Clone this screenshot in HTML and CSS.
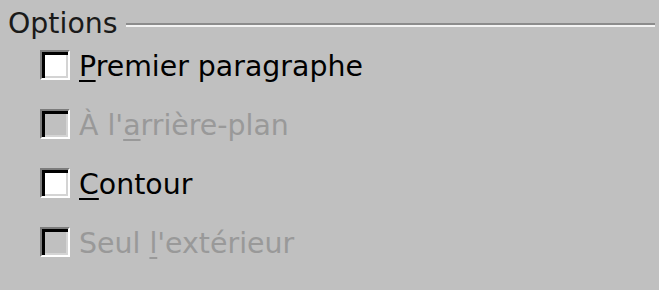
FILE: index.html
```html
<!DOCTYPE html>
<html>
<head>
<meta charset="utf-8">
<link rel="stylesheet" href="styles.css">
</head>
<body>
<div class="group">
  <div class="legend"><span class="title">Options</span><span class="rule"></span></div>
  <div class="list">
    <div class="row"><span class="box"></span><span class="label"><u>P</u>remier paragraphe</span></div>
    <div class="row disabled"><span class="box"></span><span class="label">À l'<u>a</u>rrière-plan</span></div>
    <div class="row"><span class="box"></span><span class="label"><u>C</u>ontour</span></div>
    <div class="row disabled"><span class="box"></span><span class="label">Seul <u>l</u>'extérieur</span></div>
  </div>
</div>
</body>
</html>
```
FILE: styles.css
```css
html, body {
  margin: 0;
  padding: 0;
  background: #c0c0c0;
  width: 659px;
  height: 290px;
  overflow: hidden;
}
body {
  font-family: "DejaVu Sans", sans-serif;
  font-size: 28.4px;
  color: #000;
}
.group {
  padding: 8px 4px 0 8px;
}
.legend {
  display: flex;
  align-items: center;
  height: 32px;
}
.title {
  color: #1a1a1a;
  line-height: 32px;
}
.rule {
  flex: 1;
  margin-left: 8px;
  margin-top: 2px;
  border-top: 2px solid #8c8c8c;
  border-bottom: 2px solid #f4f4f4;
  height: 0;
}
.list {
  display: flex;
  flex-direction: column;
  gap: 29px;
  padding-left: 32px;
  margin-top: 10px;
}
.row {
  display: flex;
  align-items: center;
  height: 30px;
}
.box {
  box-sizing: border-box;
  width: 30px;
  height: 30px;
  flex: none;
  background: #fff;
  border-top: 2px solid #7c7c7c;
  border-left: 2px solid #7c7c7c;
  border-right: 2px solid #ffffff;
  border-bottom: 2px solid #ffffff;
  box-shadow: inset 3px 3px 0 #000, inset -2px -2px 0 #d4d4d4;
}
.disabled .box {
  background: #c0c0c0;
}
.label {
  margin-left: 9px;
  line-height: 30px;
  padding-top: 3px;
}
.disabled .label {
  color: #999999;
}
u {
  text-decoration-thickness: 2px;
  text-underline-offset: 4px;
}
```
